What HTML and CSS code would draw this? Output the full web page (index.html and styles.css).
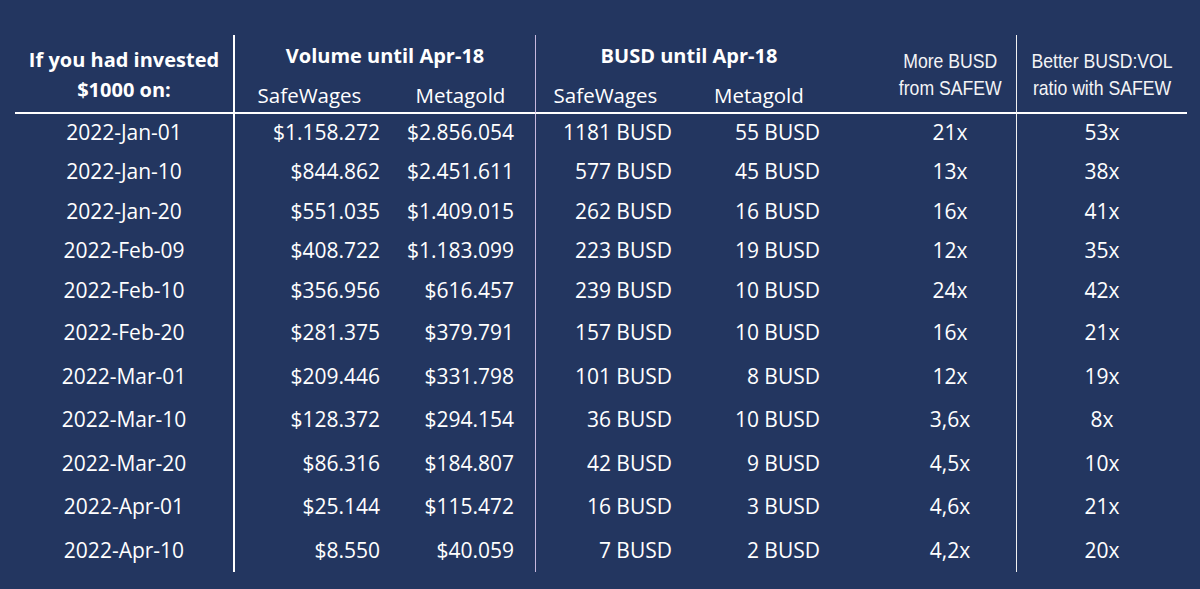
FILE: index.html
```html
<!DOCTYPE html>
<html lang="en">
<head>
<meta charset="utf-8">
<title>SafeWages vs Metagold</title>
<link rel="stylesheet" href="styles.css">
</head>
<body>
<div class="sheet">
  <div class="grid">
    <div class="c c1 h-main span2 bold">If you had invested<br>$1000 on:</div>
    <div class="c grp-vol bold">Volume until Apr-18</div>
    <div class="c grp-busd bold">BUSD until Apr-18</div>
    <div class="c c6 h-narrow span2"><span class="narrow">More BUSD<br>from SAFEW</span></div>
    <div class="c c7 h-narrow span2"><span class="narrow">Better BUSD:VOL<br>ratio with SAFEW</span></div>
    <div class="c c2 sub sub2">SafeWages</div>
    <div class="c c3 sub sub3">Metagold</div>
    <div class="c c4 sub sub4">SafeWages</div>
    <div class="c c5 sub sub5">Metagold</div>

    <div class="c c1">2022-Jan-01</div><div class="c c2 r">$1.158.272</div><div class="c c3 r">$2.856.054</div><div class="c c4 r">1181 BUSD</div><div class="c c5 r">55 BUSD</div><div class="c c6">21x</div><div class="c c7">53x</div>
    <div class="c c1">2022-Jan-10</div><div class="c c2 r">$844.862</div><div class="c c3 r">$2.451.611</div><div class="c c4 r">577 BUSD</div><div class="c c5 r">45 BUSD</div><div class="c c6">13x</div><div class="c c7">38x</div>
    <div class="c c1">2022-Jan-20</div><div class="c c2 r">$551.035</div><div class="c c3 r">$1.409.015</div><div class="c c4 r">262 BUSD</div><div class="c c5 r">16 BUSD</div><div class="c c6">16x</div><div class="c c7">41x</div>
    <div class="c c1">2022-Feb-09</div><div class="c c2 r">$408.722</div><div class="c c3 r">$1.183.099</div><div class="c c4 r">223 BUSD</div><div class="c c5 r">19 BUSD</div><div class="c c6">12x</div><div class="c c7">35x</div>
    <div class="c c1">2022-Feb-10</div><div class="c c2 r">$356.956</div><div class="c c3 r">$616.457</div><div class="c c4 r">239 BUSD</div><div class="c c5 r">10 BUSD</div><div class="c c6">24x</div><div class="c c7">42x</div>
    <div class="c c1">2022-Feb-20</div><div class="c c2 r">$281.375</div><div class="c c3 r">$379.791</div><div class="c c4 r">157 BUSD</div><div class="c c5 r">10 BUSD</div><div class="c c6">16x</div><div class="c c7">21x</div>
    <div class="c c1">2022-Mar-01</div><div class="c c2 r">$209.446</div><div class="c c3 r">$331.798</div><div class="c c4 r">101 BUSD</div><div class="c c5 r">8 BUSD</div><div class="c c6">12x</div><div class="c c7">19x</div>
    <div class="c c1">2022-Mar-10</div><div class="c c2 r">$128.372</div><div class="c c3 r">$294.154</div><div class="c c4 r">36 BUSD</div><div class="c c5 r">10 BUSD</div><div class="c c6">3,6x</div><div class="c c7">8x</div>
    <div class="c c1">2022-Mar-20</div><div class="c c2 r">$86.316</div><div class="c c3 r">$184.807</div><div class="c c4 r">42 BUSD</div><div class="c c5 r">9 BUSD</div><div class="c c6">4,5x</div><div class="c c7">10x</div>
    <div class="c c1">2022-Apr-01</div><div class="c c2 r">$25.144</div><div class="c c3 r">$115.472</div><div class="c c4 r">16 BUSD</div><div class="c c5 r">3 BUSD</div><div class="c c6">4,6x</div><div class="c c7">21x</div>
    <div class="c c1">2022-Apr-10</div><div class="c c2 r">$8.550</div><div class="c c3 r">$40.059</div><div class="c c4 r">7 BUSD</div><div class="c c5 r">2 BUSD</div><div class="c c6">4,2x</div><div class="c c7">20x</div>
  </div>
</div>
</body>
</html>
```

FILE: styles.css
```css
html, body {
  margin: 0;
  padding: 0;
  background: #233660;
}
body {
  width: 1200px;
  height: 589px;
  overflow: hidden;
  font-family: "Open Sans", "Noto Sans", sans-serif;
  color: #ffffff;
}
.sheet {
  padding: 35px 13px 0 15px;
}
.grid {
  display: grid;
  grid-template-columns: 220px 155px 146px 149px 199px 133px 170px;
  grid-template-rows: 40px 39px 37.5px 40px 39px 39px 41px 43.5px 44px 43.5px 43.5px 43.5px 43.5px;
  width: 1172px;
}
.c {
  box-sizing: border-box;
  display: flex;
  align-items: center;
  justify-content: center;
  font-size: 21px;
  white-space: nowrap;
  line-height: 1;
}
.c1 { border-right: 2px solid #ffffff; }
.c3 { border-right: 1px solid #c7b8de; }
.c6 { border-right: 1px solid #f0f0f0; }
.r { justify-content: flex-end; }
.c2.r { padding-right: 10px; }
.c3.r { padding-right: 21px; }
.c4.r { padding-right: 13px; }
.c5.r { padding-right: 64px; }

.bold {
  font-weight: 700;
  font-size: 20px;
}
.span2 {
  grid-row: span 2;
  border-bottom: 2px solid #ffffff;
}
.h-main {
  text-align: center;
  line-height: 30px;
  padding-top: 2px;
}
.grp-vol {
  grid-column: 2 / span 2;
  border-right: 1px solid #c7b8de;
  padding-top: 2px;
}
.grp-busd {
  grid-column: 4 / span 2;
  padding-right: 42px;
  padding-top: 2px;
}
.sub {
  font-size: 20.5px;
  border-bottom: 2px solid #ffffff;
  padding-top: 4px;
}
.sub2 { padding-right: 6px; }
.sub3 { padding-right: 4px; }
.sub4 { padding-right: 10px; }
.sub5 {
  justify-content: flex-start;
  padding-left: 29px;
}
.h-narrow {
  font-family: "Liberation Sans", Arial, sans-serif;
  font-size: 21px;
  text-align: center;
  line-height: 27px;
  padding-top: 0;
  color: #f4f4f6;
}
.narrow {
  display: inline-block;
  transform: scaleX(0.84);
}
```
